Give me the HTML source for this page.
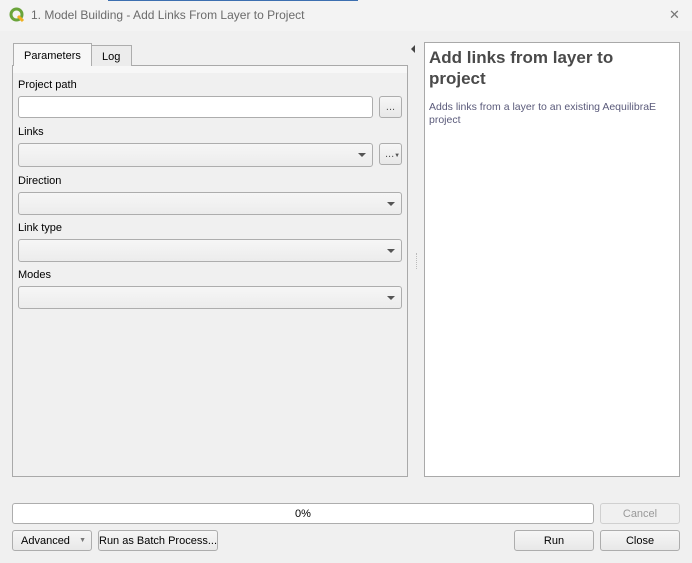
<!DOCTYPE html>
<html><head><style>
*{box-sizing:border-box;margin:0;padding:0}
body{width:692px;height:563px;background:#f0f0f0;font-family:"Liberation Sans",sans-serif;font-size:11px;color:#000;position:relative;overflow:hidden}
.a{position:absolute}
.inp{position:absolute;background:#fff;border:1px solid #adadad;border-radius:3px}
.cb{position:absolute;background:linear-gradient(#f6f6f6,#ececec);border:1px solid #adadad;border-radius:3px}
.cb:after{content:"";position:absolute;right:6px;top:9px;border-left:4px solid transparent;border-right:4px solid transparent;border-top:4px solid #555}
.btn{position:absolute;background:linear-gradient(#f6f6f6,#e8e8e8);border:1px solid #adadad;border-radius:3px;text-align:center;font-size:11px}
.lbl{position:absolute;left:18px;font-size:11px}
</style></head><body>
<div class="a" style="left:0;top:0;width:692px;height:32px;background:#f3f3f3;border-bottom:1px solid #f0f0f0"></div>
<div class="a" style="left:108px;top:0;width:250px;height:1px;background:#3c6fb0"></div>
<svg class="a" style="left:9px;top:7px" width="16" height="16" viewBox="0 0 16 16"><circle cx="7.5" cy="7.5" r="5.5" fill="none" stroke="#6aa43a" stroke-width="3"/><path d="M9 9l5 5" stroke="#f0b020" stroke-width="3"/></svg>
<div class="a" style="left:31px;top:8px;font-size:12px;color:#6b6b6b">1. Model Building - Add Links From Layer to Project</div>
<div class="a" style="left:669px;top:7px;font-size:13px;color:#777">✕</div>

<div class="a" style="left:12px;top:65px;width:396px;height:412px;border:1px solid #a9a9a9;background:#f0f0f0"></div>
<div class="a" style="left:13px;top:66px;width:394px;height:7px;background:#f7f7f7"></div>
<div class="a" style="left:91px;top:45px;width:41px;height:21px;border:1px solid #adadad;border-bottom:none;background:#ececec;padding-top:5px;padding-left:10px">Log</div>
<div class="a" style="left:13px;top:43px;width:79px;height:23px;border:1px solid #adadad;border-bottom:none;background:#f7f7f7;padding-top:6px;padding-left:10px">Parameters</div>
<div class="a" style="left:14px;top:65px;width:77px;height:2px;background:#f7f7f7"></div>

<div class="lbl" style="top:79px">Project path</div>
<div class="inp" style="left:18px;top:96px;width:355px;height:22px"></div>
<div class="btn" style="left:379px;top:96px;width:23px;height:22px;line-height:21px;color:#555">...</div>
<div class="lbl" style="top:126px">Links</div>
<div class="cb" style="left:18px;top:143px;width:355px;height:24px"></div>
<div class="btn" style="left:379px;top:143px;width:23px;height:22px;line-height:21px;color:#555;text-align:left;padding-left:5px">...<span style="font-size:6px">▼</span></div>
<div class="lbl" style="top:175px">Direction</div>
<div class="cb" style="left:18px;top:192px;width:384px;height:23px"></div>
<div class="lbl" style="top:222px">Link type</div>
<div class="cb" style="left:18px;top:239px;width:384px;height:23px"></div>
<div class="lbl" style="top:269px">Modes</div>
<div class="cb" style="left:18px;top:286px;width:384px;height:23px"></div>

<div class="a" style="left:411px;top:45px;border-top:4px solid transparent;border-bottom:4px solid transparent;border-right:4px solid #444"></div>
<div class="a" style="left:416px;top:253px;width:1px;height:16px;border-left:1px dotted #bbb"></div>

<div class="a" style="left:424px;top:42px;width:256px;height:435px;background:#fff;border:1px solid #a9a9a9"></div>
<div class="a" style="left:429px;top:47px;width:240px;font-size:17px;font-weight:bold;color:#4a4a4a;line-height:21px">Add links from layer to project</div>
<div class="a" style="left:429px;top:101px;width:245px;font-size:10.5px;color:#5a5a7a;line-height:13px">Adds links from a layer to an existing AequilibraE project</div>

<div class="inp" style="left:12px;top:503px;width:582px;height:21px;text-align:center;line-height:20px;font-size:11px">0%</div>
<div class="btn" style="left:600px;top:503px;width:80px;height:21px;line-height:20px;color:#999;background:#f0f0f0;border-color:#d0d0d0">Cancel</div>
<div class="btn" style="left:12px;top:530px;width:80px;height:21px;line-height:20px;text-align:left;padding-left:8px">Advanced<span style="position:absolute;right:5px;top:0;font-size:7px;color:#777">▼</span></div>
<div class="btn" style="left:98px;top:530px;width:120px;height:21px;line-height:20px">Run as Batch Process...</div>
<div class="btn" style="left:514px;top:530px;width:80px;height:21px;line-height:20px">Run</div>
<div class="btn" style="left:600px;top:530px;width:80px;height:21px;line-height:20px">Close</div>
</body></html>
